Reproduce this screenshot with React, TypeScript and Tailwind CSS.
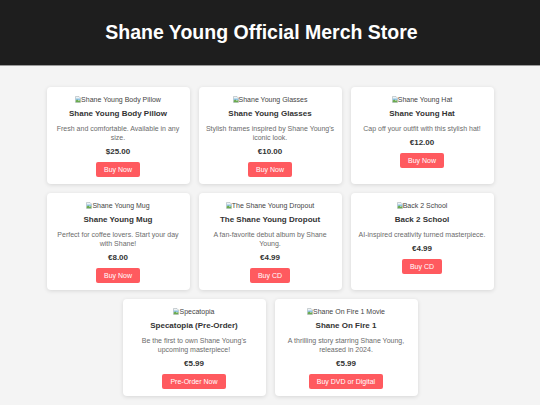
import React from "react";

type Item = { alt: string; title: string; desc: string; price: string; btn: string };

const items: Item[] = [
  { alt: "Shane Young Body Pillow", title: "Shane Young Body Pillow", desc: "Fresh and comfortable. Available in any size.", price: "$25.00", btn: "Buy Now" },
  { alt: "Shane Young Glasses", title: "Shane Young Glasses", desc: "Stylish frames inspired by Shane Young's iconic look.", price: "€10.00", btn: "Buy Now" },
  { alt: "Shane Young Hat", title: "Shane Young Hat", desc: "Cap off your outfit with this stylish hat!", price: "€12.00", btn: "Buy Now" },
  { alt: "Shane Young Mug", title: "Shane Young Mug", desc: "Perfect for coffee lovers. Start your day with Shane!", price: "€8.00", btn: "Buy Now" },
  { alt: "The Shane Young Dropout", title: "The Shane Young Dropout", desc: "A fan-favorite debut album by Shane Young.", price: "€4.99", btn: "Buy CD" },
  { alt: "Back 2 School", title: "Back 2 School", desc: "AI-inspired creativity turned masterpiece.", price: "€4.99", btn: "Buy CD" },
  { alt: "Specatopia", title: "Specatopia (Pre-Order)", desc: "Be the first to own Shane Young's upcoming masterpiece!", price: "€5.99", btn: "Pre-Order Now" },
  { alt: "Shane On Fire 1 Movie", title: "Shane On Fire 1", desc: "A thrilling story starring Shane Young, released in 2024.", price: "€5.99", btn: "Buy DVD or Digital" },
];

function BrokenIcon() {
  return (
    <svg width="6" height="7" viewBox="0 0 12 14" className="shrink-0">
      <path d="M1 1h7l3 3v9H1z" fill="#eef3f6" stroke="#9aa4ab" strokeWidth="1" />
      <path d="M1.5 5h9v3h-9z" fill="#8fc3e6" />
      <path d="M1.5 12.5V9l3-2 3 2.5 3-1.5v4.5z" fill="#6aab4f" />
    </svg>
  );
}

function Card({ it }: { it: Item }) {
  return (
    <div className="w-[143px] bg-white rounded-[4px] shadow-[0_1px_4px_rgba(0,0,0,0.12)] px-[7px] pt-[8px] pb-[7px] flex flex-col items-center text-center">
      <span className="inline-flex items-center text-[7px] leading-[9px] text-[#444]">
        <BrokenIcon />
        {it.alt}
      </span>
      <div className="mt-[5px] text-[8px] leading-[10px] font-bold text-[#333]">{it.title}</div>
      <div className="mt-[5px] text-[7px] leading-[9px] text-[#6b6b6b]">{it.desc}</div>
      <div className="mt-[5px] text-[8px] leading-[10px] font-bold text-[#333]">{it.price}</div>
      <button className="mt-[5px] h-[15px] px-[8px] rounded-[2px] bg-[#ff5a5f] text-white text-[7px] leading-[15px]">
        {it.btn}
      </button>
    </div>
  );
}

export default function App() {
  return (
    <div
      className="min-h-[405px] bg-[#f4f4f4]"
      style={{ fontFamily: '"Liberation Sans", Arial, sans-serif' }}
    >
      <header className="h-[66px] bg-[#1e1e1e] border-b border-[#9a9a9a] flex items-center justify-center pr-[17px]">
        <h1 className="text-[19.5px] font-bold text-white">Shane Young Official Merch Store</h1>
      </header>
      <main className="w-[447px] mx-auto pt-[21px] flex flex-wrap justify-center gap-[9px]">
        {items.map((it) => (
          <Card key={it.title} it={it} />
        ))}
      </main>
    </div>
  );
}
